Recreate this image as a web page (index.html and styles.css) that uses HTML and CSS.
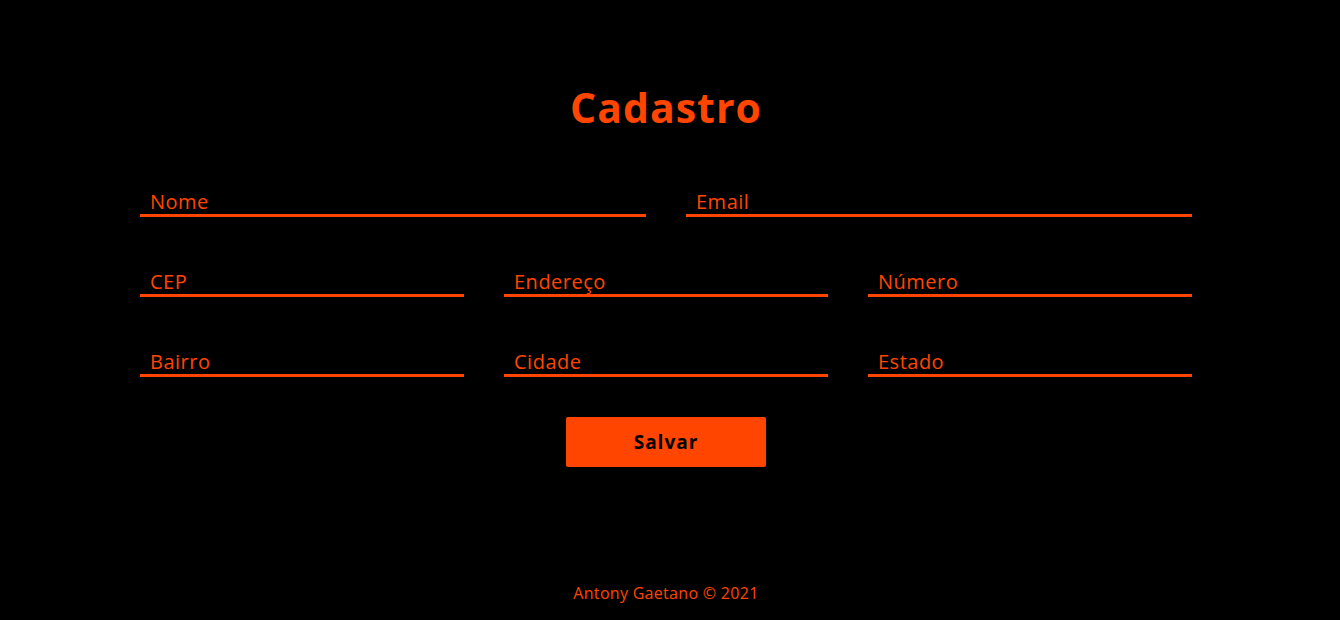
FILE: index.html
```html
<!DOCTYPE html>
<html lang="pt-BR">
<head>
<meta charset="utf-8">
<title>Cadastro</title>
<link rel="stylesheet" href="styles.css">
</head>
<body>
<main class="page">
  <h1 class="title">Cadastro</h1>
  <form class="form">
    <div class="row row-2">
      <input class="field" type="text" placeholder="Nome">
      <input class="field" type="text" placeholder="Email">
    </div>
    <div class="row row-3">
      <input class="field" type="text" placeholder="CEP">
      <input class="field" type="text" placeholder="Endereço">
      <input class="field" type="text" placeholder="Número">
    </div>
    <div class="row row-3">
      <input class="field" type="text" placeholder="Bairro">
      <input class="field" type="text" placeholder="Cidade">
      <input class="field" type="text" placeholder="Estado">
    </div>
    <div class="actions">
      <button class="btn" type="button">Salvar</button>
    </div>
  </form>
  <footer class="footer">Antony Gaetano © 2021</footer>
</main>
</body>
</html>
```

FILE: styles.css
```css
html, body {
  margin: 0;
  padding: 0;
  background: #000;
}
body {
  font-family: "Open Sans", "DejaVu Sans", sans-serif;
  color: #ff4500;
}
.page {
  width: 1052px;
  margin-left: 140px;
  display: flex;
  flex-direction: column;
  align-items: stretch;
}
.title {
  margin: 0;
  padding: 82px 0 45px;
  line-height: 50px;
  font-size: 41px;
  letter-spacing: 1px;
  font-weight: 700;
  text-align: center;
  color: #ff4500;
}
.form {
  display: flex;
  flex-direction: column;
  gap: 40px;
}
.row {
  display: grid;
  column-gap: 40px;
}
.row-2 { grid-template-columns: 1fr 1fr; }
.row-3 { grid-template-columns: 1fr 1fr 1fr; }
.field {
  height: 40px;
  box-sizing: border-box;
  padding: 12px 10px 0;
  background: transparent;
  border: none;
  border-bottom: 3px solid #ff4500;
  outline: none;
  font-family: inherit;
  font-size: 20px;
  letter-spacing: 0.5px;
  color: #ff4500;
  width: 100%;
}
.field::placeholder {
  color: #ff4500;
  opacity: 1;
}
.actions {
  display: flex;
  justify-content: center;
}
.btn {
  width: 200px;
  height: 50px;
  background: #ff4500;
  border: none;
  border-radius: 2px;
  font-family: inherit;
  font-size: 19px;
  letter-spacing: 1px;
  font-weight: 700;
  color: #000;
}
.footer {
  margin-top: 115px;
  text-align: center;
  font-size: 16px;
  letter-spacing: 0.3px;
  line-height: 22px;
}
```
